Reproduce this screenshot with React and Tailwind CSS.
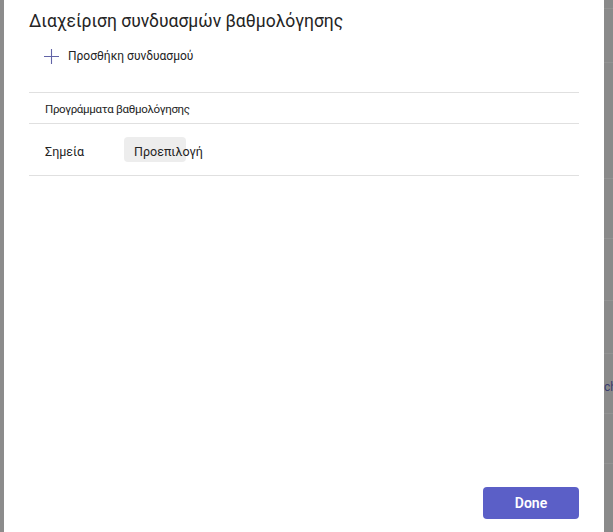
const App = () => {
  return (
    <div className="flex h-[532px] w-[613px] overflow-hidden bg-[#8a8a8a] font-['Roboto',sans-serif] text-[#242424]">
      <div className="w-[4px] shrink-0 bg-[#8c8c8c]" />

      <div className="flex w-[600px] shrink-0 flex-col bg-white px-[25px] pb-[13px] pt-[8px]">
        <h1 className="text-[17.5px] leading-[26px]">
          Διαχείριση συνδυασμών βαθμολόγησης
        </h1>

        <button className="mt-[13px] flex items-center gap-[9px] self-start pl-[15px] text-[12px] leading-[18px]">
          <svg width="15" height="15" viewBox="0 0 15 15" className="text-[#6264a7]">
            <path d="M7.5 0v15M0 7.5h15" stroke="currentColor" strokeWidth="1.1" fill="none" />
          </svg>
          <span>Προσθήκη συνδυασμού</span>
        </button>

        <div className="mt-[27px] border-t border-[#e0e0e0]" />
        <div className="flex h-[30px] items-center pl-[16px] pt-[4px] text-[11.5px] tracking-[-0.3px]">
          Προγράμματα βαθμολόγησης
        </div>
        <div className="border-t border-[#e0e0e0]" />
        <div className="flex h-[51px] items-center pl-[16px] text-[12.5px]">
          <span className="relative top-[3px] w-[79px]">Σημεία</span>
          <span className="relative flex h-[25px] items-center">
            <span className="absolute left-0 top-0 h-[25px] w-[62px] rounded-[4px] bg-[#ededed]" />
            <span className="relative top-[3px] pl-[10px]">Προεπιλογή</span>
          </span>
        </div>
        <div className="border-t border-[#e0e0e0]" />

        <div className="flex-1" />

        <div className="flex justify-end">
          <button className="h-[32px] w-[96px] rounded-[4px] bg-[#5b5fc7] text-[14px] font-semibold text-white">
            Done
          </button>
        </div>
      </div>

      <div className="relative flex-1 overflow-hidden">
        <div className="absolute left-0 top-[8px] h-px w-full bg-[#939393]" />
        <div className="absolute left-0 top-[62px] h-px w-full bg-[#939393]" />
        <div className="absolute left-0 top-[178px] h-px w-full bg-[#939393]" />
        <div className="absolute left-0 top-[238px] h-px w-full bg-[#939393]" />
        <div className="absolute left-0 top-[300px] h-px w-full bg-[#939393]" />
        <div className="absolute left-0 top-[353px] h-px w-full bg-[#939393]" />
        <div className="absolute left-0 top-[413px] h-px w-full bg-[#939393]" />
        <div className="absolute left-0 top-[463px] h-px w-full bg-[#939393]" />
        <span className="absolute left-0 top-[379px] text-[12px] leading-[16px] text-[#3a3c6e]">ch</span>
      </div>
    </div>
  )
}

export default App
